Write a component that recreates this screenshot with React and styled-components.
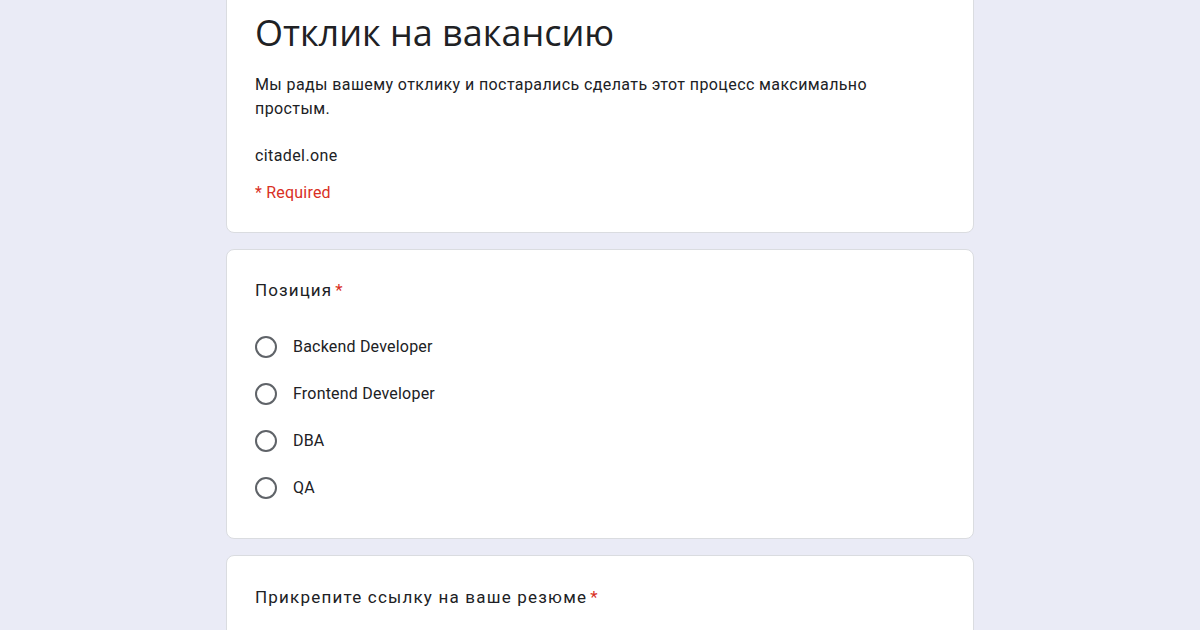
import React from "react";
import styled, { createGlobalStyle } from "styled-components";

const Global = createGlobalStyle`
  html, body { margin: 0; padding: 0; background: #eaebf6; }
  body { font-family: Roboto, "Noto Sans", Arial, sans-serif; color: #202124; overflow: hidden; }
`;

const Page = styled.div`
  width: 748px;
  margin: 0 auto;
  display: flex;
  flex-direction: column;
  gap: 16px;
`;

const Card = styled.section`
  background: #fff;
  border: 1px solid #dadce0;
  border-radius: 8px;
  padding: ${(p) => p.$pad || "28px 28px 27px"};
  margin-top: ${(p) => p.$offset || "0"};
`;

const Title = styled.h1`
  margin: 0;
  font-family: "Open Sans", Roboto, sans-serif;
  font-weight: 400;
  font-size: 36px;
  line-height: 48px;
`;

const Desc = styled.p`
  margin: ${(p) => p.$m || "0"};
  max-width: 660px;
  font-size: 16px;
  line-height: 24px;
  letter-spacing: ${(p) => p.$ls || "0.4px"};
`;

const Required = styled.div`
  margin-top: 13px;
  font-size: 16px;
  line-height: 24px;
  letter-spacing: 0.2px;
  color: #d93025;
`;

const Question = styled.div`
  font-size: 17px;
  line-height: 24px;
  letter-spacing: ${(p) => p.$ls || "1.1px"};
`;

const Star = styled.span`
  color: #d93025;
  margin-left: 3px;
`;

const Options = styled.div`
  margin-top: 21px;
  display: flex;
  flex-direction: column;
`;

const Option = styled.label`
  height: 47px;
  display: flex;
  align-items: center;
  gap: 16px;
  font-size: 16px;
  letter-spacing: 0.2px;
`;

const Radio = styled.span`
  width: 18px;
  height: 18px;
  border: 2px solid #5f6368;
  border-radius: 50%;
  flex: none;
`;

export default function App() {
  const opts = ["Backend Developer", "Frontend Developer", "DBA", "QA"];
  return (
    <>
      <Global />
      <Page>
        <Card $offset="-20px">
          <Title>Отклик на вакансию</Title>
          <Desc $m="16px 0 0">
            Мы рады вашему отклику и постарались сделать этот процесс максимально простым.
          </Desc>
          <Desc $m="23px 0 0" $ls="0.4px">citadel.one</Desc>
          <Required>* Required</Required>
        </Card>
        <Card>
          <Question>
            Позиция<Star>*</Star>
          </Question>
          <Options>
            {opts.map((o) => (
              <Option key={o}>
                <Radio />
                {o}
              </Option>
            ))}
          </Options>
        </Card>
        <Card $pad="29px 28px 80px">
          <Question $ls="1.2px">
            Прикрепите ссылку на ваше резюме<Star>*</Star>
          </Question>
        </Card>
      </Page>
    </>
  );
}
